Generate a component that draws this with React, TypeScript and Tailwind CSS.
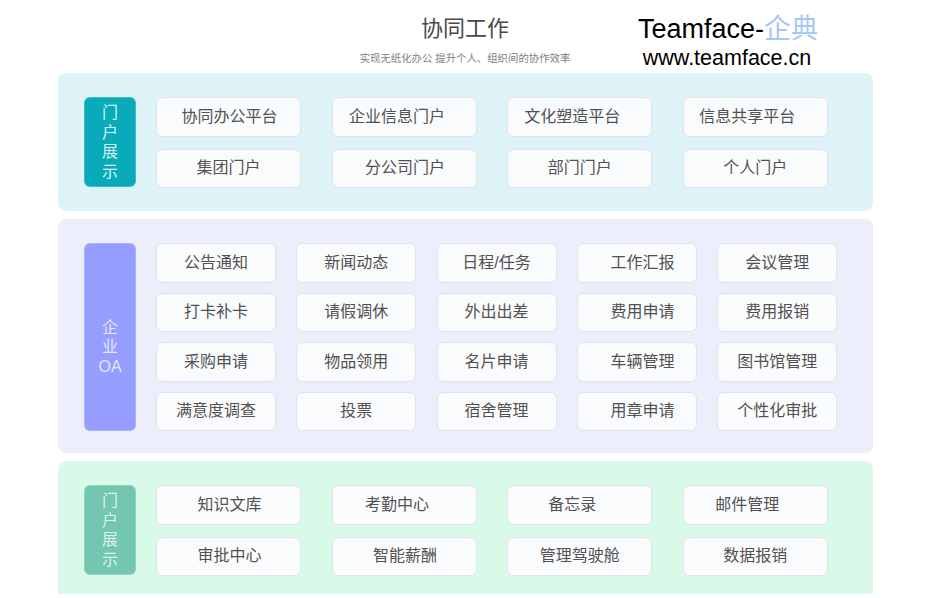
import React from 'react';

const cjk = "font-['Liberation_Sans','Noto_Sans_CJK_SC',sans-serif]";

interface Item {
  label: string;
  shift?: string;
}

const portalTop: Item[] = [
  { label: '协同办公平台', shift: 'pl-0.5' },
  { label: '企业信息门户', shift: 'pr-[14px]' },
  { label: '文化塑造平台', shift: 'pr-[15px]' },
  { label: '信息共享平台', shift: 'pr-4' },
  { label: '集团门户' },
  { label: '分公司门户', shift: 'pl-0.5' },
  { label: '部门门户' },
  { label: '个人门户' },
];

const oaItems: Item[] = [
  { label: '公告通知' },
  { label: '新闻动态' },
  { label: '日程/任务' },
  { label: '工作汇报', shift: 'pl-[11px]' },
  { label: '会议管理' },
  { label: '打卡补卡' },
  { label: '请假调休' },
  { label: '外出出差' },
  { label: '费用申请', shift: 'pl-[11px]' },
  { label: '费用报销' },
  { label: '采购申请' },
  { label: '物品领用' },
  { label: '名片申请' },
  { label: '车辆管理', shift: 'pl-[11px]' },
  { label: '图书馆管理' },
  { label: '满意度调查' },
  { label: '投票' },
  { label: '宿舍管理' },
  { label: '用章申请', shift: 'pl-[11px]' },
  { label: '个性化审批' },
];

const portalBottom: Item[] = [
  { label: '知识文库', shift: 'pl-0.5' },
  { label: '考勤中心', shift: 'pr-[14px]' },
  { label: '备忘录', shift: 'pr-[15px]' },
  { label: '邮件管理', shift: 'pr-4' },
  { label: '审批中心', shift: 'pl-0.5' },
  { label: '智能薪酬', shift: 'pl-0.5' },
  { label: '管理驾驶舱' },
  { label: '数据报销' },
];

const Tile = ({ item }: { item: Item }) => (
  <div
    className={`h-[39.5px] flex items-center justify-center rounded-md border border-[#e0e3e8] bg-[#fafbfd] text-base text-[#525252] ${item.shift ?? ''}`}
  >
    {item.label}
  </div>
);

const SideLabel = ({ lines, color, className }: { lines: string[]; color: string; className: string }) => (
  <div
    className={`w-[52px] shrink-0 flex flex-col items-center justify-center rounded-md border border-white/20 text-base leading-[19.5px] ${color} ${className}`}
  >
    {lines.map((line) => (
      <span key={line}>{line}</span>
    ))}
  </div>
);

export default function App() {
  return (
    <div className={`w-[931px] h-[598px] overflow-hidden bg-white ${cjk}`}>
      <header className="h-[73px] flex">
        <div className="ml-[340px] w-[250px] pt-[15px] flex flex-col items-center">
          <div className="text-[22px] leading-7 text-[#4a4a4a]">协同工作</div>
          <div className="mt-[9px] text-[10.4px] leading-[14px] text-[#808080]">实现无纸化办公 提升个人、组织间的协作效率</div>
        </div>
        <div className="ml-[48px] pt-[11px] flex flex-col items-center w-[180px]">
          <div className="text-[27px] leading-9 text-black whitespace-nowrap">
            Teamface-<span className="text-[#a9c6f5]">企典</span>
          </div>
          <div className="-mt-0.5 -ml-0.5 text-[21.5px] leading-[26px] text-black">www.teamface.cn</div>
        </div>
      </header>

      <main className="ml-[58px] w-[815px] flex flex-col gap-2">
        <section className="h-[138px] rounded-lg bg-[#def3f8] pl-[26px] pt-6 flex gap-5">
          <SideLabel lines={['门', '户', '展', '示']} color="bg-[#09aab9] text-[#d6f3f5]" className="h-[90px]" />
          <div className="grid grid-cols-[145px_145px_145px_145px] gap-x-[30.6px] gap-y-3 content-start">
            {portalTop.map((item) => (
              <Tile key={item.label} item={item} />
            ))}
          </div>
        </section>

        <section className="h-[234px] rounded-lg bg-[#edeefb] pl-[26px] pt-6 flex gap-5">
          <SideLabel lines={['企', '业', 'OA']} color="bg-[#959dff] text-[#e4e6ff] pt-5" className="h-[188px]" />
          <div className="grid grid-cols-[120px_120px_120px_120px_120px] gap-x-[20.3px] gap-y-[10px] content-start">
            {oaItems.map((item) => (
              <Tile key={item.label} item={item} />
            ))}
          </div>
        </section>

        <section className="h-[133px] rounded-t-lg bg-[#d9fae9] pl-[26px] pt-6 flex gap-5">
          <SideLabel lines={['门', '户', '展', '示']} color="bg-[#73c6b0] text-[#d9f3ea]" className="h-[90px]" />
          <div className="grid grid-cols-[145px_145px_145px_145px] gap-x-[30.6px] gap-y-3 content-start">
            {portalBottom.map((item) => (
              <Tile key={item.label} item={item} />
            ))}
          </div>
        </section>
      </main>
    </div>
  );
}
